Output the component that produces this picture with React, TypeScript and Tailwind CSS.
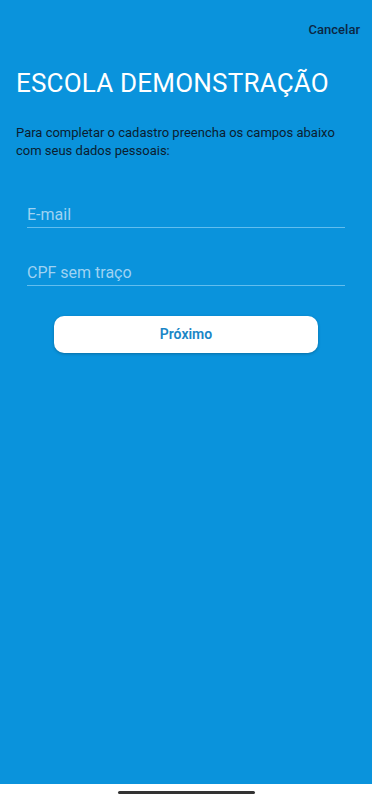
export default function App() {
  return (
    <div
      className="flex h-[800px] w-[372px] flex-col bg-white"
      style={{ fontFamily: "Roboto, 'Liberation Sans', sans-serif" }}
    >
      <div className="flex flex-1 flex-col bg-[#0a93dc]">
        <div className="flex justify-end px-3 pt-[20px]">
          <button className="text-[13px] font-medium text-[#0c2744]">Cancelar</button>
        </div>
        <h1 className="mt-[28px] px-4 text-[26px] leading-[30px] tracking-[0.2px] text-white">
          ESCOLA DEMONSTRAÇÃO
        </h1>
        <p className="mt-[26px] px-4 text-[13px] leading-[18px] text-[#0b1d30]">
          Para completar o cadastro preencha os campos abaixo com seus dados pessoais:
        </p>
        <div className="mt-[46px] flex flex-col gap-[36px] pl-[27px] pr-[27px]">
          <input
            placeholder="E-mail"
            className="h-[22px] border-b border-[#62bdee] bg-transparent pb-[2px] text-[16px] text-white outline-none placeholder:text-[#9fd2f2]"
          />
          <input
            placeholder="CPF sem traço"
            className="h-[22px] border-b border-[#62bdee] bg-transparent pb-[2px] text-[16px] text-white outline-none placeholder:text-[#9fd2f2]"
          />
        </div>
        <div className="mt-[30px] flex justify-center">
          <button className="h-[37px] w-[264px] rounded-[10px] bg-white text-[14px] font-semibold text-[#1a86c6] shadow-[0_1px_3px_rgba(0,0,0,0.25)]">
            Próximo
          </button>
        </div>
      </div>
      <div className="flex h-[16px] items-center justify-center">
        <div className="h-[3px] w-[137px] rounded-full bg-[#333]" />
      </div>
    </div>
  );
}
